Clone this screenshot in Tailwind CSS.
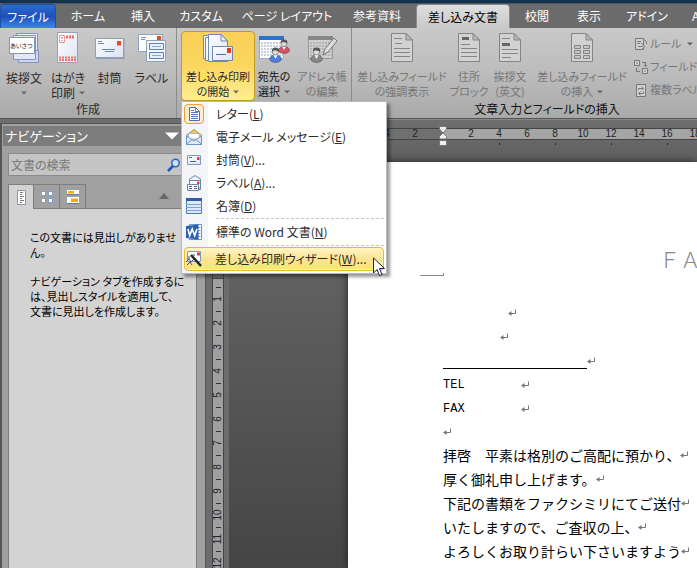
<!DOCTYPE html>
<html lang="ja">
<head>
<meta charset="utf-8">
<title>差し込み文書</title>
<script src="https://cdn.jsdelivr.net/npm/@tailwindcss/browser@4"></script>
</head>
<body class="relative flex h-screen flex-col overflow-hidden bg-[#6e6e6e] font-['Noto_Sans_CJK_JP',sans-serif] text-xs leading-[14px] text-[#2b2b2b] [font-feature-settings:'palt']">

<svg class="absolute h-0 w-0" aria-hidden="true">
  <defs>
    <linearGradient id="paper" x1="0" y1="0" x2="1" y2="1"><stop offset="0" stop-color="#fff"/><stop offset="1" stop-color="#dbe3f2"/></linearGradient>
    <symbol id="ret" viewBox="0 0 8 8"><path d="M7.500 0.500V4.500H2" fill="none" stroke="#777"/><path d="M0 4.500L3.500 2V7Z" fill="#777"/></symbol>
    <symbol id="graydoc" viewBox="0 0 24 30"><path d="M1.500 1.500H16L22.500 8V29.500H1.500Z" fill="#d2d2d2" stroke="#858585"/><path d="M16 1.500V8H22.500Z" fill="#b8b8b8" stroke="#858585"/></symbol>
    <symbol id="person" viewBox="0 0 12 15"><path d="M.5 12Q.5 7.500 6 7.500T11.500 12Q10 14.500 6 14.500T.5 12Z" fill="currentColor" stroke="#555" stroke-width=".6"/><path d="M4 7.500L6 11L8 7.500Z" fill="#fff"/><circle cx="6" cy="4.500" r="3" fill="#ddd" stroke="#666" stroke-width=".6"/><path d="M2.800 4.500Q2 .5 6 .5T9.200 4.500Q7 3 5 3Q4 3 2.800 4.500Z" fill="#555"/></symbol>
    <symbol id="down" viewBox="0 0 6 4"><path d="M0 .5H6L3 3.500Z" fill="#666"/></symbol>
  </defs>
</svg>

<div class="h-1 shrink-0 border-b border-[#4b545c] bg-[#14324e]"></div>

<nav aria-label="リボン" class="grid h-6 shrink-0 grid-cols-[56px_64px_46px_70px_102px_78px_94px_54px_50px_66px_1fr] overflow-hidden bg-[#6b6b6b] text-white">
  <button class="rounded-t-sm border border-b-0 border-[#1d4ea8] bg-linear-to-b from-[#2c6cd0] via-[#1c50b8] to-[#3f86e8]">ファイル</button>
  <button>ホーム</button>
  <button>挿入</button>
  <button>カスタム</button>
  <button>ページ レイアウト</button>
  <button>参考資料</button>
  <button class="rounded-t-sm border border-b-0 border-[#8a8a8a] bg-linear-to-b from-[#dedede] to-[#c9c9c9] text-black">差し込み文書</button>
  <button>校閲</button>
  <button>表示</button>
  <button>アドイン</button>
  <button class="pl-3 text-left">A</button>
</nav>

<div class="flex h-[91px] shrink-0 overflow-hidden border-b border-[#555] bg-linear-to-b from-[#c9c9c9] via-[#bcbcbc] to-[#a9a9a9] whitespace-nowrap">
  <section class="flex w-[177px] shrink-0 flex-col border-r border-[#8c8c8c]">
    <div class="grid h-[74px] grid-cols-[46px_42px_41px_43px] pl-px pt-1 leading-[15px]">
      <button class="flex flex-col items-center gap-1.5">
        <svg class="h-8 w-8 shrink-0" viewBox="0 0 32 32"><g stroke="#8693b8"><path d="M8.500 1.500H29.500V23.500H8.500Z" fill="#eaf0fc"/><path d="M10.500 18.500H30.500V30.500H10.500Z" fill="#cdd7f2"/><path d="M5.500 3.500H27.500V27.500H5.500Z" fill="#e0e8fa"/><path d="M1.500 5.500H26.500V21.500H1.500Z" fill="#fff"/></g><text x="2" y="16" font-size="6" fill="#222">あいさつ</text></svg>
        <span>挨拶文</span><svg class="h-1 w-1.5"><use href="#down"/></svg>
      </button>
      <button class="flex flex-col items-center gap-1.5">
        <svg class="h-8 w-8 shrink-0" viewBox="0 0 32 32"><path d="M5.500 .5H25.500V30.500H5.500Z" fill="url(#paper)" stroke="#999fae"/><g fill="none" stroke="#ed6e68" stroke-dasharray="2 1"><path d="M7.500 3.500H12.500V10.500H7.500ZM10 5V9"/><path d="M14 5H23" stroke-width="3"/><path d="M7 25.500H24M7 28H24" stroke-width="2"/></g></svg>
        <span>はがき<br><span class="flex items-center gap-1">印刷<svg class="h-1 w-1.5"><use href="#down"/></svg></span></span>
      </button>
      <button class="flex flex-col items-center gap-1.5">
        <svg class="h-8 w-8 shrink-0" viewBox="0 0 32 32"><path d="M2 6.500H30.500V27H2Z" fill="#8e9bb5"/><path d="M1.500 6.500H29.500V25.500H1.500Z" fill="url(#paper)" stroke="#8fa0bd"/><path d="M4 9.500H8M4 11.500H10M8 17.500H21M11 19.500H20" stroke="#6c87b8"/><path d="M23 9H27V13.500H23Z" fill="#e64a22"/></svg>
        <span>封筒</span>
      </button>
      <button class="flex flex-col items-center gap-1.5">
        <svg class="h-8 w-8 shrink-0" viewBox="0 0 32 32"><path d="M2.500 2.500H26.500V19.500H2.500Z" fill="#fff" stroke="#8fa0bd"/><path d="M5 5.500H10M5 7.500H9" stroke="#7189b6"/><path d="M21 4H25V8H21Z" fill="#e64a22"/><path d="M10.500 8.500H29.500V29.500H10.500Z" fill="#f4f7fd" stroke="#8fa0bd"/><path d="M13.500 11.500H27.500V17.500H13.500ZM13.500 20.500H27.500V26.500H13.500Z" fill="#e6efff" stroke="#5f80b5"/><path d="M16 14.500H25M16 23.500H25" stroke="#8fa8ce"/></svg>
        <span>ラベル</span>
      </button>
    </div>
    <div class="text-center">作成</div>
  </section>

  <section class="flex w-[175px] shrink-0 border-r border-[#8c8c8c] pl-1 text-[11px] leading-[15px]">
    <div class="grid h-[73px] w-full grid-cols-[74px_38px_58px] pt-[3px]">
      <button class="flex flex-col items-center gap-[5px] rounded-sm border border-[#c29b29] bg-linear-to-b from-[#f9cf57] via-[#fbd760] to-[#ffee92]">
        <svg class="h-8 w-8 shrink-0" viewBox="0 0 32 32"><g fill="url(#paper)" stroke="#7186b0"><path d="M1.500 3.500H17.500V26.500H1.500Z"/><path d="M3.500 5.500H19V28.500H3.500Z"/><path d="M6.500 2.500H19L25.500 9V29.500H6.500Z"/><path d="M19 2.500V9H25.500Z"/><path d="M10.500 14.500H30.500V28.500H10.500Z"/></g><path d="M14 22.500H24" stroke="#4672b5"/><path d="M25 16H29V21H25Z" fill="#e03c22"/></svg>
        <span>差し込み印刷<br><span class="flex items-center justify-center gap-1">の開始<svg class="h-1 w-1.5"><use href="#down"/></svg></span></span>
      </button>
      <button class="flex flex-col items-center gap-[5px] pt-px text-[#111]">
        <svg class="h-8 w-8 shrink-0" viewBox="0 0 32 32"><path d="M1.500 4.500H25.500V26.500H1.500Z" fill="#fff" stroke="#9aacc9"/><path d="M1 4H26V8H1Z" fill="#2e72cf"/><path d="M3 11H25M3 14H25M3 17H25M3 20H25M3 23H25" stroke="#8fa0bd" stroke-dasharray="2 1"/><use href="#person" x="20" y="7" width="12" height="15" color="#db5060"/><use href="#person" x="11" y="15" width="13" height="16" color="#4a7de0"/></svg>
        <span>宛先の<br><span class="flex items-center justify-center gap-1">選択<svg class="h-1 w-1.5"><use href="#down"/></svg></span></span>
      </button>
      <button class="flex flex-col items-center gap-[5px] pt-px text-[#777]">
        <svg class="h-8 w-8 shrink-0" viewBox="0 0 32 32"><path d="M2.500 4.500H26.500V26.500H2.500Z" fill="#d0d0d0" stroke="#999"/><path d="M2 4H27V8H2Z" fill="#888"/><path d="M4 11H26M4 14H26M4 17H26M4 20H26M4 23H26" stroke="#999" stroke-dasharray="2 1"/><path d="M17 23L19 17L28 6L31 9L22 20Z" fill="#ddd" stroke="#777"/><use href="#person" x="4" y="15" width="13" height="16" color="#888"/></svg>
        <span>アドレス帳<br>の編集</span>
      </button>
    </div>
  </section>

  <section class="flex w-[390px] shrink-0 flex-col text-[#777]">
    <div class="grid h-[74px] grid-cols-[100px_34px_48px_96px_112px] pt-1 text-[11px] leading-[15px]">
      <button class="flex flex-col items-center gap-[7px]">
        <svg class="h-[30px] w-6 shrink-0" viewBox="0 0 24 30"><use href="#graydoc"/><path d="M4 6.500H12M5 11.500H12M4 16.500H20M4 20.500H20M4 24.500H20" stroke="#858585"/></svg>
        <span>差し込みフィールド<br>の強調表示</span>
      </button>
      <button class="flex flex-col items-center gap-[7px]">
        <svg class="h-[30px] w-6 shrink-0" viewBox="0 0 24 30"><use href="#graydoc"/><path d="M5 6.500H12" stroke="#666" stroke-width="3"/><path d="M4 12.500H13M4 16.500H20M4 20.500H20M4 24.500H20" stroke="#858585"/></svg>
        <span>住所<br>ブロック</span>
      </button>
      <button class="flex flex-col items-center gap-[7px]">
        <svg class="h-[30px] w-6 shrink-0" viewBox="0 0 24 30"><use href="#graydoc"/><path d="M4 12.500H12" stroke="#666" stroke-width="3"/><path d="M4 6.500H12M4 17.500H20M4 21.500H20M4 25.500H13" stroke="#858585"/></svg>
        <span>挨拶文<br>(英文)</span>
      </button>
      <button class="flex flex-col items-center gap-[7px]">
        <svg class="h-[30px] w-6 shrink-0" viewBox="0 0 24 30"><use href="#graydoc"/><path d="M4.500 13.500H10.500V16.500H4.500ZM13.500 13.500H19.500V16.500H13.500ZM4.500 18.500H10.500V21.500H4.500ZM13.500 18.500H19.500V21.500H13.500ZM4.500 23.500H10.500V26.500H4.500ZM13.500 23.500H19.500V26.500H13.500Z" fill="#c6c6c6" stroke="#858585"/></svg>
        <span>差し込みフィールド<br><span class="flex items-center justify-center gap-1">の挿入<svg class="h-1 w-1.5"><use href="#down"/></svg></span></span>
      </button>
      <div class="flex flex-col gap-2 pl-1 pt-1">
        <button class="flex items-center gap-0.5"><svg class="h-3.5 w-3.5 shrink-0" viewBox="0 0 14 14" fill="#d2d2d2" stroke="#777"><path d="M1.500 1.500H9.500V12.500H1.500Z"/><path d="M3 4.500H7M3 6.500H6M4 9.500H9M7 6L11 9.500L7 13M9 3Q13 3 12.500 7"/></svg>ルール<svg class="ml-1 h-1 w-1.5"><use href="#down"/></svg></button>
        <button class="flex items-center gap-0.5"><svg class="h-3.5 w-3.5 shrink-0" viewBox="0 0 14 14" fill="#d2d2d2" stroke="#777"><path d="M.5.5H5.500V5.500H.5ZM8.500 8.500H13.500V13.500H8.500Z"/><path d="M2 3H4M10 11H12M8 2.500H11.500V6M10 5L11.500 6.500L13 5M2.500 8V11.500H6" fill="none"/></svg>フィールドの</button>
        <button class="flex items-center gap-0.5"><svg class="h-3.5 w-3.5 shrink-0" viewBox="0 0 14 14" fill="#d2d2d2" stroke="#777"><path d="M2.500 1.500H11.500V13.500H2.500Z"/><path d="M4.500 7V5.500H9M7.500 3.500L9.500 5.500L7.500 7M9.500 8.500V10.500H5M6.500 8.500L4.500 10.500L6.500 12" fill="none"/></svg>複数ラベル</button>
      </div>
    </div>
    <div class="text-center text-[#111]">文章入力とフィールドの挿入</div>
  </section>
</div>

<div class="flex min-h-0 flex-1">
  <aside class="mt-1 flex w-[206px] shrink-0 flex-col border-t border-l-2 border-r border-[#555] bg-[#a0a0a0] pl-px pr-2 pt-0.5">
    <header class="flex h-5 shrink-0 items-center justify-between bg-[#7d7d7d] pl-0.5 pr-4 text-[13px] text-white">ナビゲーション
      <button aria-label="オプション"><svg class="mr-0.5 h-2 w-3.5" viewBox="0 0 14 8"><path d="M0 .5H14L7 7.500Z" fill="#fff"/></svg></button>
    </header>
    <label class="mt-[7px] ml-[5px] flex h-[23px] shrink-0 items-center border border-[#8a8a8a] bg-[#c5c5c5] pl-0.5">
      <input aria-label="文書の検索" placeholder="文書の検索" class="w-[156px] text-xs outline-none placeholder:text-[#777]">
      <svg class="h-3.5 w-3.5" viewBox="0 0 14 14"><circle cx="8.500" cy="5" r="3.700" fill="#cfe0f5" stroke="#2d64c0" stroke-width="1.500"/><path d="M6 8L1 13" stroke="#2752b5" stroke-width="2.500"/></svg>
    </label>
    <div class="mt-2 ml-[5px] flex h-[25px] shrink-0">
      <button aria-label="見出し" class="flex w-[26px] items-center justify-center border border-b-0 border-[#7d7d7d] bg-[#d3d3d3]"><svg class="h-4 w-4" viewBox="0 0 16 16"><path d="M4.500 1.500H12.500V15.500H4.500Z" fill="#fff" stroke="#8492a8"/><path d="M7 3.500H10M7 5.500H9M7 7.500H11M7 9.500H9M7 11.500H11M7 13.500H9" stroke="#778"/></svg></button>
      <button aria-label="ページ" class="flex w-[26px] items-center justify-center border border-l-0 border-[#7d7d7d]"><svg class="h-4 w-4" viewBox="0 0 16 16"><path d="M2.500 2.500H6.500V6.500H2.500ZM9.500 2.500H13.500V6.500H9.500ZM2.500 9.500H6.500V13.500H2.500ZM9.500 9.500H13.500V13.500H9.500Z" fill="#fff" stroke="#7f9cc8"/></svg></button>
      <button aria-label="検索結果" class="flex w-[26px] items-center justify-center border border-l-0 border-[#7d7d7d]"><svg class="h-4 w-4" viewBox="0 0 16 16"><path d="M2 1H14V6H2ZM2 8H14V15H2Z" fill="#fff"/><path d="M2 5.500H14M2 14.500H14" stroke="#68789a"/><path d="M3 2H9V4.500H3ZM6 9.500H13V13H6Z" fill="#f4a915"/></svg></button>
      <div class="flex flex-1 items-center justify-end border-b border-[#7d7d7d] pr-7"><svg class="h-1.5 w-2.5" viewBox="0 0 10 6"><path d="M0 6H10L5 0Z" fill="#666"/></svg></div>
    </div>
    <div class="ml-[5px] flex-1 border-l border-r border-[#7d7d7d] bg-[#d3d3d3] pl-[21px] pt-[21px] text-[11px] leading-[15px] whitespace-nowrap text-black">
      <p>この文書には見出しがありませ<br>ん。</p>
      <p class="mt-3.5">ナビゲーション タブを作成するに<br>は、見出しスタイルを適用して、<br>文書に見出しを作成します。</p>
    </div>
  </aside>

  <main class="flex min-w-0 flex-1 flex-col">
    <div class="h-[43px] shrink-0 border-t border-[#888] bg-linear-to-b from-[#6e6e6e] to-[#606060] pt-2 pl-[167px] font-['Liberation_Sans',sans-serif] text-[10px] leading-[10px] text-[#222]">
      <div class="flex h-3 border-y border-[#444] bg-[#a5a5a5]">
        <div class="grid w-[70px] shrink-0 grid-cols-[28px_28px_14px] bg-[#707070] text-center"><span>4</span><span>2</span></div>
        <svg class="-mx-1 -mt-[3px] h-5 w-2 shrink-0" viewBox="0 0 8 20"><path d="M.5.5H7.500V3L4 7L.5 3ZM4 7L7.500 10.500V13H.5V10.500ZM.5 14.500H7.500V19.500H.5Z" fill="#eee" stroke="#777"/></svg>
        <ol class="flex pl-3.5 text-center *:w-7 *:shrink-0">
          <li>2</li>
          <li>4<span class="mx-auto mt-1 block h-0.5 w-px bg-[#222]"></span></li>
          <li>6</li>
          <li>8<span class="mx-auto mt-1 block h-0.5 w-px bg-[#222]"></span></li>
          <li>10</li>
          <li>12<span class="mx-auto mt-1 block h-0.5 w-px bg-[#222]"></span></li>
          <li>14</li>
          <li>16<span class="mx-auto mt-1 block h-0.5 w-px bg-[#222]"></span></li>
          <li>18</li>
        </ol>
      </div>
    </div>
    <div class="flex min-h-0 flex-1">
      <div class="w-[23px] shrink-0 overflow-hidden bg-[#6c6c6c] pl-1.5 font-['Liberation_Sans',sans-serif] text-[10px] leading-3 text-[#222]">
        <div class="w-3 border-x border-[#444] bg-[#a0a0a0]">
          <div class="h-[117px] border-b border-[#444] bg-[#707070]"></div>
          <ol class="flex flex-col pt-2 *:flex *:h-6 *:shrink-0 *:items-center *:justify-center *:bg-[linear-gradient(#333,#333)] *:bg-[length:5px_1px] *:bg-[position:top_center] *:bg-no-repeat">
            <li><span class="-rotate-90">1</span></li><li><span class="-rotate-90">2</span></li><li><span class="-rotate-90">3</span></li><li><span class="-rotate-90">4</span></li><li><span class="-rotate-90">5</span></li><li><span class="-rotate-90">6</span></li><li><span class="-rotate-90">7</span></li><li><span class="-rotate-90">8</span></li><li><span class="-rotate-90">9</span></li><li><span class="-rotate-90">10</span></li><li><span class="-rotate-90">11</span></li><li><span class="-rotate-90">12</span></li>
          </ol>
        </div>
      </div>
      <div class="flex min-w-0 flex-1 bg-linear-to-b from-[#6c6c6c] to-[#454545] pl-[119px]">
        <article class="min-w-0 flex-1 overflow-hidden bg-white pl-[95px] text-sm leading-6 whitespace-nowrap text-black shadow-[0_0_8px_#222] [font-feature-settings:normal]">
          <h1 class="flex h-[139px] items-start pt-[85px] pl-[216px] text-[21px] font-light text-[#888]">ＦＡ</h1>
          <p class="flex h-6 items-center pl-[65px]"><svg class="h-2 w-2"><use href="#ret"/></svg></p>
          <p class="flex h-6 items-center pl-[57px]"><svg class="h-2 w-2"><use href="#ret"/></svg></p>
          <p class="flex h-6 items-center"><span class="h-4 w-36 border-b border-black"></span><svg class="h-2 w-2"><use href="#ret"/></svg></p>
          <p class="flex h-6 items-center"><span class="w-[78px] font-['Liberation_Mono',monospace] text-xs">TEL</span><svg class="h-2 w-2"><use href="#ret"/></svg></p>
          <p class="flex h-6 items-center"><span class="w-[78px] font-['Liberation_Mono',monospace] text-xs">FAX</span><svg class="h-2 w-2"><use href="#ret"/></svg></p>
          <p class="flex h-[22px] items-center"><svg class="h-2 w-2"><use href="#ret"/></svg></p>
          <p class="flex h-6 items-center">拝啓　平素は格別のご高配に預かり、<svg class="h-2 w-2 shrink-0"><use href="#ret"/></svg></p>
          <p class="flex h-6 items-center">厚く御礼申し上げます。<svg class="h-2 w-2 shrink-0"><use href="#ret"/></svg></p>
          <p class="flex h-6 items-center">下記の書類をファクシミリにてご送付<svg class="h-2 w-2 shrink-0"><use href="#ret"/></svg></p>
          <p class="flex h-6 items-center">いたしますので、ご査収の上、<svg class="h-2 w-2 shrink-0"><use href="#ret"/></svg></p>
          <p class="flex h-6 items-center">よろしくお取り計らい下さいますよう<svg class="h-2 w-2 shrink-0"><use href="#ret"/></svg></p>
        </article>
      </div>
    </div>
  </main>
</div>

<div role="menu" class="absolute top-[101px] left-[181px] w-[206px] border border-[#b5b8bd] bg-white bg-linear-to-r from-[#f3f5f8] from-[26px] to-white to-[26px] px-0.5 pt-px pb-0.5 shadow-[3px_3px_3px_#0006] *:flex *:w-full *:items-center *:gap-3">
  <button role="menuitem" class="h-[22px]"><span class="flex h-5 w-5 items-center justify-center rounded-sm border border-[#ef9a3c] bg-[#fdeecb]"><svg class="h-4 w-4" viewBox="0 0 16 16"><path d="M3.500 1.500H9.500L13.500 5.500V14.500H3.500Z" fill="#fff" stroke="#4e6e9e"/><path d="M9.500 1.500V5.500H13.500M5 4.500H8M5 6.500H12M5 8.500H12M5 10.500H12M5 12.500H12" fill="none" stroke="#4e7ab5"/></svg></span><span>レター(<u>L</u>)</span></button>
  <button role="menuitem" class="h-[23px]"><svg class="mx-0.5 h-4 w-4" viewBox="0 0 16 16"><path d="M.5 6L8 .5L15.500 6V15.500H.5Z" fill="#f5c862" stroke="#c38d30"/><path d="M2.500 4.500H13.500V10H2.500Z" fill="#fff" stroke="#9fb8d8"/><path d="M.5 7L8 12L15.500 7V15.500H.5Z" fill="#dceafb" stroke="#6d95c8"/><path d="M.5 15L6 10.500M15.500 15L10 10.500" stroke="#6d95c8"/></svg><span>電子メール メッセージ(<u>E</u>)</span></button>
  <button role="menuitem" class="h-[23px]"><svg class="mx-0.5 h-4 w-4" viewBox="0 0 16 16"><path d="M1.500 3.500H14.500V12.500H1.500Z" fill="url(#paper)" stroke="#8098bd"/><path d="M3 5.500H6M4 9.500H10" stroke="#45669d"/><path d="M11 5H13.500V8H11Z" fill="#df4230"/></svg><span>封筒(<u>V</u>)...</span></button>
  <button role="menuitem" class="h-[23px]"><svg class="mx-0.5 h-4 w-4" viewBox="0 0 16 16"><path d="M3.500 8V4L9 .5L14.500 4V14.500H10" fill="#eef4fc" stroke="#70839f"/><path d="M3.500 5.500H14.500V13H3.500Z" fill="#fff" stroke="#70839f"/><path d="M11 6.500H13.500V9H11Z" fill="#df4230"/><path d="M1.500 9.500H12.500V15.500H1.500Z" fill="#fff" stroke="#70839f"/><path d="M3 11.500H6M8 11.500H11M3 13.500H6M8 13.500H11" stroke="#45669d"/></svg><span>ラベル(<u>A</u>)...</span></button>
  <button role="menuitem" class="h-[23px]"><svg class="mx-0.5 h-4 w-4" viewBox="0 0 16 16"><path d="M.5.5H15.500V15.500H.5Z" fill="#dce9fa" stroke="#4c79bb"/><path d="M0 1.500H16" stroke="#315ca2" stroke-width="3"/><path d="M0 6.500H16M0 9.500H16M0 12.500H16" stroke="#7fa2d3"/></svg><span>名簿(<u>D</u>)</span></button>
  <div role="separator" class="h-[3px] pl-8"><span class="w-full border-t border-dashed border-[#c5c5c5]"></span></div>
  <button role="menuitem" class="h-6"><svg class="mx-0.5 h-4 w-4" viewBox="0 0 16 16"><path d="M3.500.5H15.500V15.500H3.500Z" fill="#fff" stroke="#6f8fc4"/><path d="M12 3.500H14.500M12 6.500H14.500M12 9.500H14.500M12 12.500H14.500" stroke="#7fa2d3"/><path d="M0 2L12.500.5V15.500L0 14Z" fill="#2861b4"/><path d="M2 5L3.700 11.500L6.200 5L8.700 11.500L11 5" fill="none" stroke="#fff" stroke-width="1.700"/></svg><span>標準の Word 文書(<u>N</u>)</span></button>
  <div role="separator" class="h-[3px] pl-8"><span class="w-full border-t border-dashed border-[#c5c5c5]"></span></div>
  <button role="menuitem" class="h-6 rounded-sm border border-[#e7b92c] bg-linear-to-b from-[#fff5c5] via-[#fde391] to-[#ffe479] shadow-[inset_0_0_0_1px_#fff3b8]"><svg class="mx-px h-4 w-4" viewBox="0 0 16 16"><path d="M1.500.5H14.500V10.500H1.500Z" fill="#fff" stroke="#8098bd"/><path d="M11 1.500H14V4.500H11Z" fill="#df4230"/><path d="M5 4L15 15" stroke="#222" stroke-width="2.500"/><path d="M0 11L3 8L5 11L8 8M1 14L4 11L6 14M3 5V8M8 3V5" fill="none" stroke="#354b80"/></svg><span>差し込み印刷ウィザード(<u>W</u>)...</span></button>
</div>

<div class="pointer-events-none absolute top-[257px] left-[372px]"><svg class="h-5 w-3.5" viewBox="0 0 14 20"><path d="M1.500 1V16L5 12.500L7.500 18.500L10 17.500L7.500 11.500H12.500Z" fill="#fff" stroke="#16213a"/></svg></div>
<div class="pointer-events-none absolute top-[273px] left-[420px] h-[3px] w-6 border-r border-b border-[#888]"></div>
</body>
</html>
